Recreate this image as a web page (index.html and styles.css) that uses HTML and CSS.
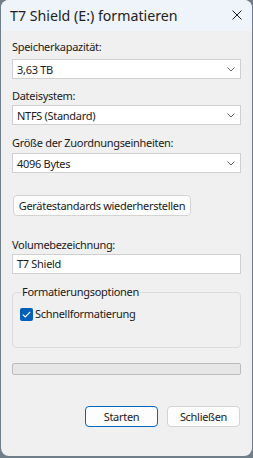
FILE: index.html
```html
<!doctype html>
<html lang="de">
<head>
  <meta charset="UTF-8">
  <title>T7 Shield (E:) formatieren</title>
  <link rel="stylesheet" href="styles.css">
</head>
<body>
  <div class="dlg">
    <div class="titlebar">
      <span class="title">T7 Shield (E:) formatieren</span>
      <svg class="close" width="10" height="10" viewBox="0 0 10 10"><path d="M0.5 0.5 L9.5 9.5 M9.5 0.5 L0.5 9.5" stroke="#1a1a1a" stroke-width="1"/></svg>
    </div>
    <div class="content">
      <div class="lbl first">Speicherkapazität:</div>
      <div class="combo"><span>3,63 TB</span><svg width="8" height="5" viewBox="0 0 8 5"><path d="M0.5 0.5 L4 4 L7.5 0.5" fill="none" stroke="#606060"/></svg></div>

      <div class="lbl">Dateisystem:</div>
      <div class="combo"><span>NTFS (Standard)</span><svg width="8" height="5" viewBox="0 0 8 5"><path d="M0.5 0.5 L4 4 L7.5 0.5" fill="none" stroke="#606060"/></svg></div>

      <div class="lbl third">Größe der Zuordnungseinheiten:</div>
      <div class="combo"><span>4096 Bytes</span><svg width="8" height="5" viewBox="0 0 8 5"><path d="M0.5 0.5 L4 4 L7.5 0.5" fill="none" stroke="#606060"/></svg></div>

      <button class="btn restore">Gerätestandards wiederherstellen</button>

      <div class="lbl vol">Volumebezeichnung:</div>
      <div class="edit">T7 Shield</div>

      <fieldset class="group">
        <legend>Formatierungsoptionen</legend>
        <label class="check"><span class="box"><svg width="9" height="7" viewBox="0 0 9 7"><path d="M0.8 3.6 L3.3 6 L8.2 0.8" fill="none" stroke="#fff" stroke-width="1.2"/></svg></span>Schnellformatierung</label>
      </fieldset>

      <div class="progress"></div>

      <div class="actions">
        <button class="btn def">Starten</button>
        <button class="btn">Schließen</button>
      </div>
    </div>
  </div>
</body>
</html>
```

FILE: styles.css
```css
*{margin:0;
  padding:0;
  box-sizing:border-box;}
body{background:#6f7e89;
     width:253px;
     height:458px;
     overflow:hidden;
     font-family:"Noto Sans","Liberation Sans",sans-serif;
     font-size:11px;
     letter-spacing:-0.3px;
     color:#1a1a1a;
     white-space:nowrap;}
.dlg{margin:0 1px;
     height:456px;
     background:#f0f0f0;
     border-radius:8px;
     overflow:hidden;}
.titlebar{height:31px;
          background:#eef4f9;
          display:flex;
          align-items:center;
          justify-content:space-between;
          padding:0 10px 0 9px;}
.title{font-size:14.2px;
       letter-spacing:0;
       color:#222;}
.close{margin-top:-1px;}
.content{padding:0 11px;}
.lbl{line-height:16px;
     margin-top:9px;
     margin-bottom:1px;}
.lbl.first{margin-top:8px;
           margin-bottom:4px;}
.lbl.third{margin-top:10px;
           margin-bottom:2px;}
.combo{height:20px;
       background:#fff;
       border:1px solid #d0d0d0;
       display:flex;
       align-items:center;
       justify-content:space-between;
       padding:0 5px 0 4px;}
.btn{font-family:inherit;
     font-size:11px;
     letter-spacing:-0.3px;
     color:#1a1a1a;
     background:#fdfdfd;
     border:1px solid #d3d3d3;
     border-radius:4px;
     height:21px;
     white-space:nowrap;}
.restore{display:block;
         margin:22px 0 0 1px;
         width:178px;}
.lbl.vol{margin-top:21px;
         margin-bottom:1px;}
.edit{height:20px;
      background:#fff;
      border:1px solid #d0d0d0;
      padding:0 4px;
      line-height:18px;}
.group{margin-top:10px;
       height:64px;
       border:1px solid #dcdcdc;
       border-radius:4px;
       padding:0 7px;}
.group legend{padding:0 1px;
              margin-left:1px;
              line-height:16px;}
.check{display:flex;
       align-items:center;
       margin-top:6px;
       line-height:16px;}
.box{width:13px;
     height:13px;
     background:#005fb8;
     border-radius:2px;
     display:flex;
     align-items:center;
     justify-content:center;
     margin-right:2px;}
.progress{margin-top:15px;
          height:12px;
          background:#e6e6e6;
          border:1px solid #bcbcbc;
          border-radius:2px;}
.actions{display:flex;
         justify-content:flex-end;
         gap:9px;
         margin-top:31px;
         padding-right:1px;}
.actions .btn{width:73px;}
.actions .def{border-color:#0067c0;}
```
